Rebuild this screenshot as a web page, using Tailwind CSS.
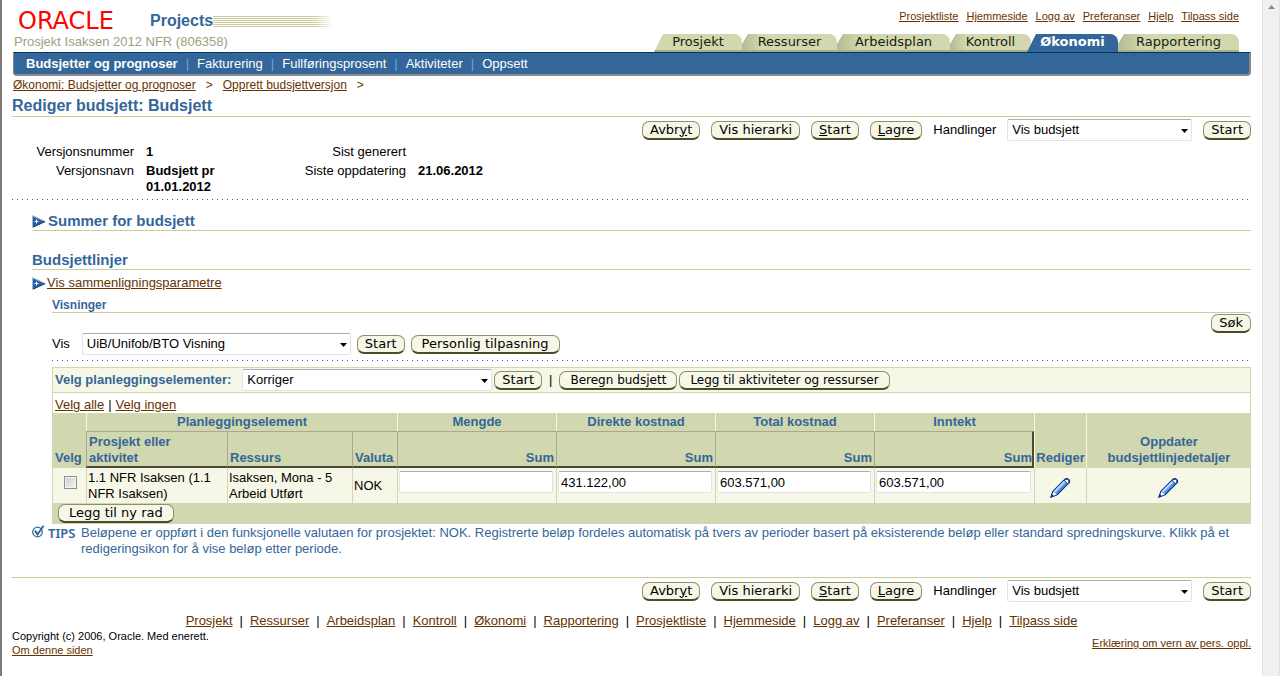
<!DOCTYPE html>
<html lang="no">
<head>
<meta charset="utf-8">
<title>Rediger budsjett: Budsjett</title>
<script src="https://cdn.jsdelivr.net/npm/@tailwindcss/browser@4"></script>
</head>
<body class="flex min-h-screen bg-white font-['Liberation_Sans',Arial,sans-serif] text-[13px] leading-4 text-black">
<svg class="hidden" aria-hidden="true">
  <defs>
    <symbol id="expand" viewBox="0 0 14 13">
      <path d="M0.5 0.5L13.5 6.5L0.5 12.5Z" fill="#2a5f97"/><path d="M0.5 12V0.8L12 6" fill="none" stroke="#8fbbe8"/><path d="M1 12.2L13 6.7" stroke="#173f6d"/>
      <path d="M2.500 6.5H6.500M4.5 4.500V8.500" stroke="#fff"/>
    </symbol>
    <symbol id="pencil" viewBox="0 0 22 21">
      <path d="M1 20L3 14L15.500 1.500Q17 0 19 1Q21 2 20.500 4.500L7.500 17.500Z" fill="#6ca9e8" stroke="#0b2f86" stroke-width="1.200"/>
      <path d="M4.500 14.500L15.500 3.500" stroke="#b9dcff" stroke-width="2"/>
      <path d="M7 16.500L18.500 5" stroke="#3b78c8" stroke-width="1.200"/>
      <path d="M15 3L16.500 1.500Q18 0.800 19.300 1.800Q20.300 3 19.500 4.800L18.500 6Z" fill="#fff" stroke="#0b2f86"/>
      <path d="M3.200 14.500L7 17.300L2.600 18.800Z" fill="#fff"/><path d="M0.500 20.500L1.800 16.800L4.200 19.200Z" fill="#0b2f86"/>
    </symbol>
    <symbol id="arrow" viewBox="0 0 7 4"><path d="M0 0H7L3.500 4Z" fill="#000"/></symbol>
  </defs>
</svg>

<main class="min-w-0 flex-1 border-l-2 border-[#7c7c7c] pr-[11px] pl-[10px]">
  <header class="flex h-[52px] items-end justify-between">
    <div class="self-start pt-2">
      <div class="flex h-[26px] items-center">
        <span class="w-[138px] pl-[6px] font-['DejaVu_Sans',sans-serif] text-[24px] leading-6 text-[#ff0000]">ORACLE</span>
        <span class="text-base leading-6 font-bold text-[#336699]">Projects</span>
        <span class="h-[11px] w-[120px] bg-[repeating-linear-gradient(180deg,#cccc99_0_1px,#fff_1px_2px)] [mask-image:linear-gradient(90deg,#000_85%,transparent)]"></span>
      </div>
      <div class="pl-0.5 text-[#a0a080]">Prosjekt Isaksen 2012 NFR (806358)</div>
    </div>
    <div class="flex flex-col items-end gap-[11px] pr-3">
      <nav class="flex gap-2 text-[11px] leading-[14px] text-[#663300] underline">
        <a href="#">Prosjektliste</a><a href="#">Hjemmeside</a><a href="#">Logg av</a><a href="#">Preferanser</a><a href="#">Hjelp</a><a href="#">Tilpass side</a>
      </nav>
      <nav class="flex h-[18px] text-center font-['DejaVu_Sans',sans-serif] text-[13px] leading-4 text-[#1c1c10]">
        <a href="#" class="w-[88px] rounded-tr-lg border-b-2 border-[#a8ad84] bg-[#d1d7ae] [clip-path:polygon(9px_0,100%_0,100%_100%,0_100%)]">Prosjekt</a>
        <a href="#" class="w-[95px] rounded-tr-lg border-b-2 border-[#a8ad84] bg-linear-to-r from-[#b4ba91] to-[#d1d7ae] to-20% [clip-path:polygon(6px_0,100%_0,100%_100%,0_100%,0_10px)]">Ressurser</a>
        <a href="#" class="w-[113px] rounded-tr-lg border-b-2 border-[#a8ad84] bg-linear-to-r from-[#b4ba91] to-[#d1d7ae] to-20% [clip-path:polygon(6px_0,100%_0,100%_100%,0_100%,0_10px)]">Arbeidsplan</a>
        <a href="#" class="w-[81px] rounded-tr-lg border-b-2 border-[#a8ad84] bg-linear-to-r from-[#b4ba91] to-[#d1d7ae] to-20% [clip-path:polygon(6px_0,100%_0,100%_100%,0_100%,0_10px)]">Kontroll</a>
        <a href="#" class="-ml-1 w-[91px] rounded-tr-lg bg-[#336699] font-bold text-white [clip-path:polygon(9px_0,100%_0,100%_100%,0_100%)]">Økonomi</a>
        <a href="#" class="w-[121px] rounded-tr-lg border-b-2 border-[#a8ad84] bg-linear-to-r from-[#b4ba91] to-[#d1d7ae] to-20% [clip-path:polygon(6px_0,100%_0,100%_100%,0_100%,0_10px)]">Rapportering</a>
      </nav>
    </div>
  </header>

  <nav class="ml-px flex h-6 items-center gap-2 rounded-b-sm border-t border-r-2 border-b-2 border-l border-t-[#003366] border-r-[#8a8a8a] border-b-[#8a8a8a] border-l-[#8a8a8a] bg-[#336699] pl-3 text-white">
    <a href="#" class="font-bold">Budsjetter og prognoser</a><span class="text-[#6fa8e0]">|</span>
    <a href="#">Fakturering</a><span class="text-[#6fa8e0]">|</span>
    <a href="#">Fullføringsprosent</a><span class="text-[#6fa8e0]">|</span>
    <a href="#">Aktiviteter</a><span class="text-[#6fa8e0]">|</span>
    <a href="#">Oppsett</a>
  </nav>

  <nav class="flex h-[18px] items-center gap-[10px] pl-px text-[12px] text-[#663300]">
    <a href="#" class="underline">Økonomi: Budsjetter og prognoser</a><span>&gt;</span><a href="#" class="underline">Opprett budsjettversjon</a><span>&gt;</span>
  </nav>
  <h1 class="h-[23px] border-b border-[#cccc99] text-base leading-6 font-bold text-[#336699]">Rediger budsjett: Budsjett</h1>

  <div class="flex h-[26px] items-center justify-end gap-[11px]">
    <button class="h-[19px] rounded-[7px] border border-b-2 border-[#8c9070] border-b-[#4a4d28] bg-[#f7f7e7] px-[7px] font-['DejaVu_Sans',sans-serif] text-[13px] leading-4">Avbr<u>y</u>t</button>
    <button class="h-[19px] rounded-[7px] border border-b-2 border-[#8c9070] border-b-[#4a4d28] bg-[#f7f7e7] px-[7px] font-['DejaVu_Sans',sans-serif] text-[13px] leading-4">Vis hierarki</button>
    <button class="h-[19px] rounded-[7px] border border-b-2 border-[#8c9070] border-b-[#4a4d28] bg-[#f7f7e7] px-[7px] font-['DejaVu_Sans',sans-serif] text-[13px] leading-4"><u>S</u>tart</button>
    <button class="h-[19px] rounded-[7px] border border-b-2 border-[#8c9070] border-b-[#4a4d28] bg-[#f7f7e7] px-[7px] font-['DejaVu_Sans',sans-serif] text-[13px] leading-4"><u>L</u>agre</button>
    <label for="act1">Handlinger</label>
    <div class="relative"><select id="act1" class="block h-[22px] w-[185px] appearance-none rounded-xs border border-[#e2e3ea] border-t-[#abadb3] bg-white pl-1"><option>Vis budsjett</option></select><svg class="pointer-events-none absolute top-[10px] right-1 h-1 w-[7px]"><use href="#arrow"/></svg></div>
    <button class="h-[19px] rounded-[7px] border border-b-2 border-[#8c9070] border-b-[#4a4d28] bg-[#f7f7e7] px-[7px] font-['DejaVu_Sans',sans-serif] text-[13px] leading-4">Start</button>
  </div>

  <dl class="grid grid-cols-[122px_112px_136px_1fr] gap-x-3 gap-y-[3px] pt-px pb-1">
    <dt class="text-right">Versjonsnummer</dt><dd class="font-bold">1</dd><dt class="text-right">Sist generert</dt><dd></dd>
    <dt class="text-right">Versjonsnavn</dt><dd class="font-bold">Budsjett pr<br>01.01.2012</dd><dt class="text-right">Siste oppdatering</dt><dd class="font-bold">21.06.2012</dd>
  </dl>
  <div class="h-px bg-[repeating-linear-gradient(90deg,#336699_0_1px,transparent_1px_5px)]"></div>

  <div class="pl-5">
    <h2 class="mt-3 flex h-[19px] items-center gap-0.5 border-b border-[#cccc99] text-[15px] font-bold text-[#336699]"><svg class="h-[13px] w-[14px]"><use href="#expand"/></svg>Summer for budsjett</h2>
    <h2 class="mt-5 h-[19px] border-b border-[#cccc99] text-[15px] leading-[18px] font-bold text-[#336699]">Budsjettlinjer</h2>
    <div class="flex h-[26px] items-center gap-px"><svg class="h-[13px] w-[14px]"><use href="#expand"/></svg><a href="#" class="text-[#663300] underline">Vis sammenligningsparametre</a></div>

    <section class="pl-5">
      <h3 class="h-[17px] border-b border-[#cccc99] text-[12px] leading-[18px] font-bold text-[#336699]">Visninger</h3>
      <div class="flex justify-end pt-px"><button class="h-[19px] rounded-[7px] border border-b-2 border-[#8c9070] border-b-[#4a4d28] bg-[#f7f7e7] px-[7px] font-['DejaVu_Sans',sans-serif] text-[13px] leading-4">Søk</button></div>
      <div class="flex h-[22px] items-center gap-[6px]">
        <label for="vis" class="mr-[6px]">Vis</label>
        <div class="relative"><select id="vis" class="block h-[22px] w-[269px] appearance-none rounded-xs border border-[#e2e3ea] border-t-[#abadb3] bg-white pl-1"><option>UiB/Unifob/BTO Visning</option></select><svg class="pointer-events-none absolute top-[10px] right-1 h-1 w-[7px]"><use href="#arrow"/></svg></div>
        <button class="h-[19px] rounded-[7px] border border-b-2 border-[#8c9070] border-b-[#4a4d28] bg-[#f7f7e7] px-[7px] font-['DejaVu_Sans',sans-serif] text-[13px] leading-4">Start</button>
        <button class="h-[19px] rounded-[7px] border border-b-2 border-[#8c9070] border-b-[#4a4d28] bg-[#f7f7e7] px-[10px] font-['DejaVu_Sans',sans-serif] text-[13px] leading-4">Personlig tilpasning</button>
      </div>
      <div class="mt-[5px] h-px bg-[repeating-linear-gradient(90deg,#336699_0_1px,transparent_1px_5px)]"></div>

      <div class="mt-[6px] flex h-[26px] items-center gap-0.5 border border-[#d1d7ae] bg-[#f7f7e7] pl-0.5">
        <label for="pick" class="mr-[9px] font-bold text-[#336699]">Velg planleggingselementer:</label>
        <div class="relative"><select id="pick" class="block h-[22px] w-[250px] appearance-none rounded-xs border border-[#e2e3ea] border-t-[#abadb3] bg-white pl-1"><option>Korriger</option></select><svg class="pointer-events-none absolute top-[10px] right-1 h-1 w-[7px]"><use href="#arrow"/></svg></div>
        <button class="h-[19px] rounded-[7px] border border-b-2 border-[#8c9070] border-b-[#4a4d28] bg-[#f7f7e7] px-[7px] font-['DejaVu_Sans',sans-serif] text-[13px] leading-4">Start</button>
        <span class="mx-[5px]">|</span>
        <button class="h-[19px] rounded-[7px] border border-b-2 border-[#8c9070] border-b-[#4a4d28] bg-[#f7f7e7] px-[10px] font-['DejaVu_Sans',sans-serif] text-[12px] leading-4">Beregn budsjett</button>
        <button class="h-[19px] rounded-[7px] border border-b-2 border-[#8c9070] border-b-[#4a4d28] bg-[#f7f7e7] px-[10px] font-['DejaVu_Sans',sans-serif] text-[12px] leading-4">Legg til aktiviteter og ressurser</button>
      </div>
      <div class="flex h-5 items-center gap-1 border-x border-[#d1d7ae] pt-1 pl-0.5 text-[#663300]"><a href="#" class="underline">Velg alle</a><span class="text-black">|</span><a href="#" class="underline">Velg ingen</a></div>

      <table class="w-full table-fixed border-separate border-spacing-0 text-left">
        <colgroup><col class="w-[34px]"><col class="w-[141px]"><col class="w-[125px]"><col class="w-[45px]"><col class="w-[159px]"><col class="w-[159px]"><col class="w-[159px]"><col class="w-[160px]"><col class="w-[52px]"><col></colgroup>
        <thead class="bg-[#d1d7ae] text-[#336699]">
          <tr class="h-[18px]">
            <th rowspan="2" class="pb-0.5 pl-[3px] align-bottom">Velg</th>
            <th colspan="3" class="border-l border-[#f7f7e7] text-center">Planleggingselement</th>
            <th class="border-l border-[#f7f7e7] text-center">Mengde</th>
            <th class="border-l border-[#f7f7e7] text-center">Direkte kostnad</th>
            <th class="border-l border-[#f7f7e7] text-center">Total kostnad</th>
            <th class="border-l border-[#f7f7e7] text-center">Inntekt</th>
            <th rowspan="2" class="border-l border-[#f7f7e7] pb-0.5 text-center align-bottom">Rediger</th>
            <th rowspan="2" class="border-l border-[#f7f7e7] pb-0.5 text-center align-bottom">Oppdater<br>budsjettlinjedetaljer</th>
          </tr>
          <tr class="h-[37px]">
            <th class="border-t border-b-2 border-l border-[#a9a98f] border-b-[#4c4838] pl-0.5 align-bottom">Prosjekt eller<br>aktivitet</th>
            <th class="border-t border-b-2 border-l border-[#a9a98f] border-b-[#4c4838] pl-0.5 align-bottom">Ressurs</th>
            <th class="border-t border-b-2 border-l border-[#a9a98f] border-b-[#4c4838] pl-0.5 align-bottom">Valuta</th>
            <th class="border-t border-b-2 border-l border-[#a9a98f] border-b-[#4c4838] pr-0.5 text-right align-bottom">Sum</th>
            <th class="border-t border-b-2 border-l border-[#a9a98f] border-b-[#4c4838] pr-0.5 text-right align-bottom">Sum</th>
            <th class="border-t border-b-2 border-l border-[#a9a98f] border-b-[#4c4838] pr-0.5 text-right align-bottom">Sum</th>
            <th class="border-t border-r-2 border-b-2 border-l border-[#a9a98f] border-r-[#4c4838] border-b-[#4c4838] text-right align-bottom">Sum</th>
          </tr>
        </thead>
        <tbody class="bg-[#f7f7e7]">
          <tr class="h-[35px]">
            <td class="border-l border-[#d1d7ae] pl-[11px] align-top"><input type="checkbox" aria-label="Velg rad" class="mt-2 block size-[13px] appearance-none border border-[#8e8f8f] bg-linear-to-br from-[#c8cbd0] to-[#f6f6f6] shadow-[inset_0_0_0_1px_#f4f4f4]"></td>
            <td class="border-l border-[#d1d7ae] pl-px">1.1 NFR Isaksen (1.1 NFR Isaksen)</td>
            <td class="border-l border-[#d1d7ae] pl-px">Isaksen, Mona - 5<br>Arbeid Utført</td>
            <td class="border-l border-[#d1d7ae] pl-px">NOK</td>
            <td class="border-l border-[#d1d7ae] pt-[3px] pr-[3px] pl-px align-top"><input type="text" aria-label="Mengde" class="block h-[22px] w-full rounded-xs border border-[#e2e3ea] border-t-[#abadb3] bg-white px-0.5"></td>
            <td class="border-l border-[#d1d7ae] pt-[3px] pr-[3px] pl-px align-top"><input type="text" aria-label="Direkte kostnad" value="431.122,00" class="block h-[22px] w-full rounded-xs border border-[#e2e3ea] border-t-[#abadb3] bg-white px-0.5"></td>
            <td class="border-l border-[#d1d7ae] pt-[3px] pr-[3px] pl-px align-top"><input type="text" aria-label="Total kostnad" value="603.571,00" class="block h-[22px] w-full rounded-xs border border-[#e2e3ea] border-t-[#abadb3] bg-white px-0.5"></td>
            <td class="border-l border-[#d1d7ae] pt-[3px] pr-[3px] pl-px align-top"><input type="text" aria-label="Inntekt" value="603.571,00" class="block h-[22px] w-full rounded-xs border border-[#e2e3ea] border-t-[#abadb3] bg-white px-0.5"></td>
            <td class="border-l border-[#d1d7ae] pt-1"><button aria-label="Rediger" class="mx-auto block"><svg class="h-5 w-[21px]"><use href="#pencil"/></svg></button></td>
            <td class="border-x border-[#d1d7ae] pt-1"><button aria-label="Oppdater budsjettlinjedetaljer" class="mx-auto block"><svg class="h-5 w-[21px]"><use href="#pencil"/></svg></button></td>
          </tr>
        </tbody>
        <tfoot class="bg-[#d1d7ae]">
          <tr class="h-[21px]"><td colspan="10" class="pl-[6px]"><button class="block h-[19px] rounded-[7px] border border-b-2 border-[#8c9070] border-b-[#4a4d28] bg-[#f7f7e7] px-[10px] font-['DejaVu_Sans',sans-serif] text-[13px] leading-4">Legg til ny rad</button></td></tr>
        </tfoot>
      </table>
    </section>

    <div class="flex pt-px pr-5 text-[#336699]">
      <svg class="mr-[3px] h-[13px] w-[13px] shrink-0" viewBox="0 0 13 13"><circle cx="5.500" cy="7" r="4.800" fill="#fff" stroke="#336699" stroke-width="1.200"/><path d="M3 5.500L5.500 9.500L11.500 0.800" fill="none" stroke="#336699" stroke-width="2"/></svg>
      <span class="w-[33px] shrink-0 font-['Noto_Sans',sans-serif] text-[13px] font-semibold">TIPS</span>
      <p>Beløpene er oppført i den funksjonelle valutaen for prosjektet: NOK. Registrerte beløp fordeles automatisk på tvers av perioder basert på eksisterende beløp eller standard spredningskurve. Klikk på et redigeringsikon for å vise beløp etter periode.</p>
    </div>
  </div>

  <footer class="mt-5">
    <div class="flex h-[27px] items-center justify-end gap-[11px] border-t border-[#cccc99]">
      <button class="h-[19px] rounded-[7px] border border-b-2 border-[#8c9070] border-b-[#4a4d28] bg-[#f7f7e7] px-[7px] font-['DejaVu_Sans',sans-serif] text-[13px] leading-4">Avbr<u>y</u>t</button>
      <button class="h-[19px] rounded-[7px] border border-b-2 border-[#8c9070] border-b-[#4a4d28] bg-[#f7f7e7] px-[7px] font-['DejaVu_Sans',sans-serif] text-[13px] leading-4">Vis hierarki</button>
      <button class="h-[19px] rounded-[7px] border border-b-2 border-[#8c9070] border-b-[#4a4d28] bg-[#f7f7e7] px-[7px] font-['DejaVu_Sans',sans-serif] text-[13px] leading-4"><u>S</u>tart</button>
      <button class="h-[19px] rounded-[7px] border border-b-2 border-[#8c9070] border-b-[#4a4d28] bg-[#f7f7e7] px-[7px] font-['DejaVu_Sans',sans-serif] text-[13px] leading-4"><u>L</u>agre</button>
      <label for="act2">Handlinger</label>
      <div class="relative"><select id="act2" class="block h-[22px] w-[185px] appearance-none rounded-xs border border-[#e2e3ea] border-t-[#abadb3] bg-white pl-1"><option>Vis budsjett</option></select><svg class="pointer-events-none absolute top-[10px] right-1 h-1 w-[7px]"><use href="#arrow"/></svg></div>
      <button class="h-[19px] rounded-[7px] border border-b-2 border-[#8c9070] border-b-[#4a4d28] bg-[#f7f7e7] px-[7px] font-['DejaVu_Sans',sans-serif] text-[13px] leading-4">Start</button>
    </div>
    <nav class="mt-[9px] flex justify-center gap-x-[7px]">
      <a href="#" class="text-[#663300] underline">Prosjekt</a><span>|</span><a href="#" class="text-[#663300] underline">Ressurser</a><span>|</span><a href="#" class="text-[#663300] underline">Arbeidsplan</a><span>|</span><a href="#" class="text-[#663300] underline">Kontroll</a><span>|</span><a href="#" class="text-[#663300] underline">Økonomi</a><span>|</span><a href="#" class="text-[#663300] underline">Rapportering</a><span>|</span><a href="#" class="text-[#663300] underline">Prosjektliste</a><span>|</span><a href="#" class="text-[#663300] underline">Hjemmeside</a><span>|</span><a href="#" class="text-[#663300] underline">Logg av</a><span>|</span><a href="#" class="text-[#663300] underline">Preferanser</a><span>|</span><a href="#" class="text-[#663300] underline">Hjelp</a><span>|</span><a href="#" class="text-[#663300] underline">Tilpass side</a>
    </nav>
    <div class="flex items-center justify-between text-[11px] leading-[14px]">
      <div><p>Copyright (c) 2006, Oracle. Med enerett.</p><a href="#" class="text-[#663300] underline">Om denne siden</a></div>
      <a href="#" class="text-[#663300] underline">Erklæring om vern av pers. oppl.</a>
    </div>
  </footer>
</main>
<div class="flex w-[18px] shrink-0 justify-center border-x border-[#e3e3e3] bg-[#f0f0f0] pt-[5px]" aria-hidden="true"><svg class="h-1 w-[7px]" viewBox="0 0 7 4"><path d="M0 4H7L3.500 0Z" fill="#8a8a8a"/></svg></div>
</body>
</html>
